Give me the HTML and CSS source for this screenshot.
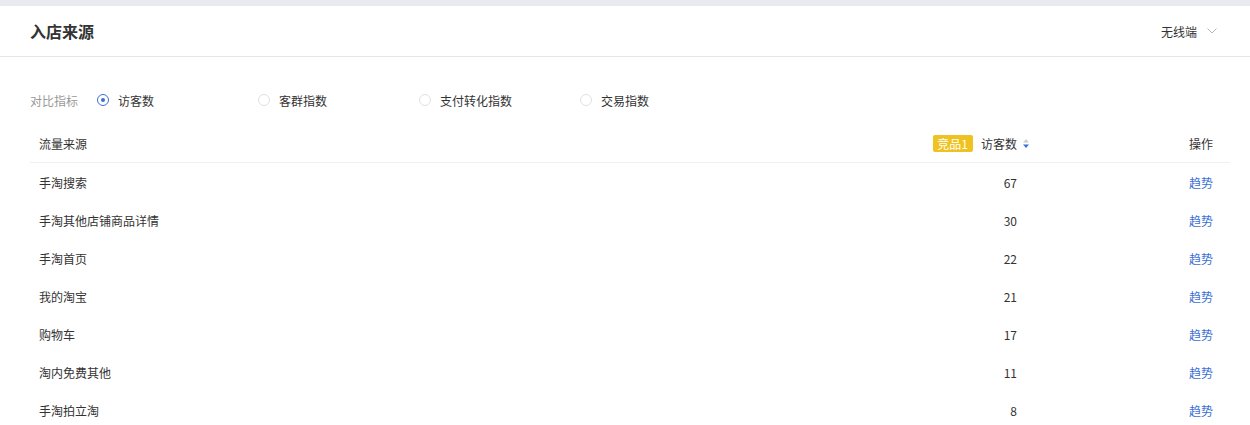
FILE: index.html
```html
<!DOCTYPE html>
<html lang="zh">
<head>
<meta charset="utf-8">
<link rel="stylesheet" href="styles.css">
</head>
<body>
<div class="topbar"></div>
<div class="header">
  <div class="title">入店来源</div>
  <div class="device">无线端
    <svg class="chev" width="10" height="6" viewBox="0 0 10 6"><path d="M0.5 0.5 L5 5 L9.5 0.5" fill="none" stroke="#b8b8b8" stroke-width="1"/></svg>
  </div>
</div>
<div class="filters">
  <span class="flabel">对比指标</span>
  <label class="opt"><span class="radio on"></span>访客数</label>
  <label class="opt"><span class="radio"></span>客群指数</label>
  <label class="opt"><span class="radio"></span>支付转化指数</label>
  <label class="opt"><span class="radio"></span>交易指数</label>
</div>
<div class="table">
  <div class="row head">
    <div class="c-name">流量来源</div>
    <div class="c-num"><span class="badge">竞品1</span><span>访客数</span>
      <svg class="sort" width="6" height="9" viewBox="0 0 6 9"><path d="M3 0 L6 3.5 L0 3.5 Z" fill="#c8cdd6"/><path d="M0 5.5 L6 5.5 L3 9 Z" fill="#3b6fd4"/></svg>
    </div>
    <div class="c-op">操作</div>
  </div>
  <div class="row"><div class="c-name">手淘搜索</div><div class="c-num">67</div><div class="c-op"><a>趋势</a></div></div>
  <div class="row"><div class="c-name">手淘其他店铺商品详情</div><div class="c-num">30</div><div class="c-op"><a>趋势</a></div></div>
  <div class="row"><div class="c-name">手淘首页</div><div class="c-num">22</div><div class="c-op"><a>趋势</a></div></div>
  <div class="row"><div class="c-name">我的淘宝</div><div class="c-num">21</div><div class="c-op"><a>趋势</a></div></div>
  <div class="row"><div class="c-name">购物车</div><div class="c-num">17</div><div class="c-op"><a>趋势</a></div></div>
  <div class="row"><div class="c-name">淘内免费其他</div><div class="c-num">11</div><div class="c-op"><a>趋势</a></div></div>
  <div class="row"><div class="c-name">手淘拍立淘</div><div class="c-num">8</div><div class="c-op"><a>趋势</a></div></div>
</div>
</body>
</html>
```
FILE: styles.css
```css
* { box-sizing: border-box; }
html, body { margin: 0; padding: 0; background: #fff; }
body {
  font-family: "Noto Sans CJK SC", "Liberation Sans", sans-serif;
  font-size: 12px;
  color: #333;
  width: 1250px;
  height: 425px;
  overflow: hidden;
}
.topbar { height: 6px; background: #e8eaef; }
.header {
  height: 51px;
  border-bottom: 1px solid #e6e6e6;
  padding: 0 33px 0 30px;
  display: flex;
  align-items: center;
  justify-content: space-between;
}
.title { font-size: 16px; font-weight: bold; color: #333; }
.device { display: flex; align-items: center; gap: 10px; color: #333; }
.chev { display: block; }
.filters {
  margin-top: 33px;
  padding-left: 30px;
  height: 20px;
  display: flex;
  align-items: center;
}
.flabel { color: #999; width: 67px; }
.opt { display: flex; align-items: center; width: 161px; }
.radio {
  width: 12px; height: 12px;
  border-radius: 50%;
  border: 1px solid #e0e0e0;
  margin-right: 9px;
  display: flex; align-items: center; justify-content: center;
}
.radio.on { border-color: #3b6fd4; }
.radio.on::after {
  content: ""; width: 4px; height: 4px; border-radius: 50%; background: #3b6fd4;
}
.table { margin: 15px 20px 0 30px; }
.row { display: flex; align-items: center; height: 38px; }
.row.head { border-bottom: 1px solid #eef0f3; }
.c-name { width: 800px; padding-left: 9px; }
.c-num { width: 200px; text-align: right; padding-right: 13px; }
.head .c-num { display: flex; justify-content: flex-end; align-items: center; padding-right: 1px; }
.badge {
  background: #f0c21f; color: #fff;
  height: 17px; line-height: 17px;
  padding: 0 5px 0 4px; border-radius: 2px;
  margin-right: 8px;
}
.sort { margin-left: 6px; display: block; }
.c-op { flex: 1; text-align: right; padding-right: 17px; }
.c-op a { color: #3b6fd4; }
```
